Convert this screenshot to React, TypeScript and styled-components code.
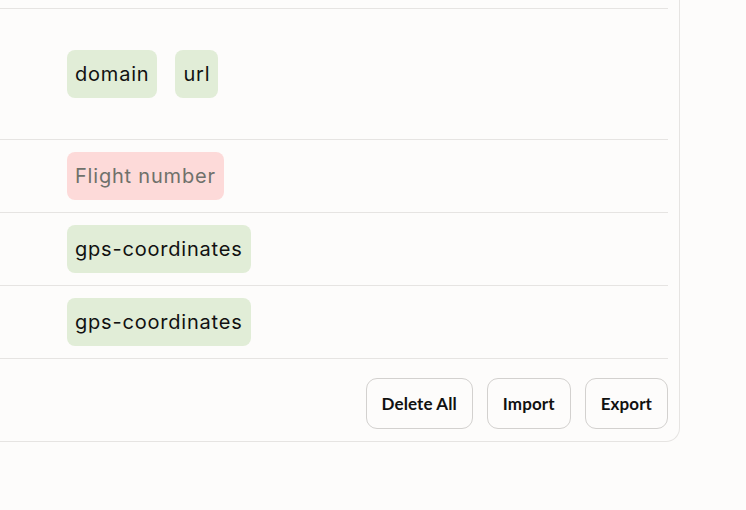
import React from 'react';
import styled, {createGlobalStyle} from "styled-components";

type Tone = 'ok' | 'error'

interface Field {
    id: number
    tall?: boolean
    tags: { label: string, tone: Tone }[]
}

const fields: Field[] = [
    {id: 1, tall: true, tags: [{label: 'domain', tone: 'ok'}, {label: 'url', tone: 'ok'}]},
    {id: 2, tags: [{label: 'Flight number', tone: 'error'}]},
    {id: 3, tags: [{label: 'gps-coordinates', tone: 'ok'}]},
    {id: 4, tags: [{label: 'gps-coordinates', tone: 'ok'}]},
]

const App = () => {
    return (
        <>
            <GlobalStyle/>
            <Page>
                <Card>
                    <RowList>
                        {
                            fields.map((field: Field) => (
                                <FieldRow key={field.id} tall={field.tall}>
                                    {
                                        field.tags.map((tag) => (
                                            <Tag key={tag.label} tone={tag.tone}>{tag.label}</Tag>
                                        ))
                                    }
                                </FieldRow>
                            ))
                        }
                    </RowList>
                    <Actions>
                        <ActionButton>Delete All</ActionButton>
                        <ActionButton>Import</ActionButton>
                        <ActionButton>Export</ActionButton>
                    </Actions>
                </Card>
            </Page>
        </>
    );
};

export default App;

const GlobalStyle = createGlobalStyle`
html, body {
  margin: 0;
  padding: 0;
  background: #fdfcfb;
}
body {
  font-family: Inter, "Noto Sans", sans-serif;
}
`

const Page = styled.div`
width: 746px;
height: 510px;
overflow: hidden;
background: #fdfcfb;
`

const Card = styled.div`
width: 680px;
padding: 8px 11px 12px 0;
border-right: 1px solid #e6e4e2;
border-bottom: 1px solid #e6e4e2;
border-bottom-right-radius: 14px;
box-sizing: border-box;
`

const RowList = styled.div`
display: flex;
flex-direction: column;
`

const FieldRow = styled.div<{ tall?: boolean }>`
display: flex;
align-items: center;
gap: 18px;
padding: 12px 0 12px 67px;
min-height: ${({tall}) => tall ? '131px' : '73px'};
box-sizing: border-box;
border-top: 1px solid #e6e4e2;
&:last-child {
  border-bottom: 1px solid #e6e4e2;
}
`

const Tag = styled.span<{ tone: Tone }>`
display: inline-flex;
align-items: center;
height: 48px;
padding: 0 8px;
border-radius: 8px;
font-size: 20px;
letter-spacing: 0.8px;
background: ${({tone}) => tone === 'error' ? '#fddad9' : '#e1edd7'};
color: ${({tone}) => tone === 'error' ? '#6f716b' : '#111111'};
`

const Actions = styled.div`
display: flex;
justify-content: flex-end;
gap: 14px;
padding-top: 19px;
`

const ActionButton = styled.button`
height: 51px;
padding: 0 15px;
border: 1px solid #d3d1cf;
border-radius: 11px;
background: transparent;
font-family: Lato, Inter, sans-serif;
font-weight: 700;
font-size: 17px;
letter-spacing: 0.1px;
color: #111111;
`
